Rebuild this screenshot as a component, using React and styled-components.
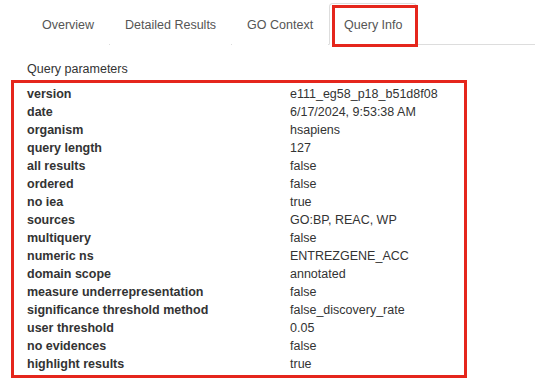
import React from 'react';
import styled, { createGlobalStyle } from 'styled-components';

const params = [
	['version', 'e111_eg58_p18_b51d8f08'],
	['date', '6/17/2024, 9:53:38 AM'],
	['organism', 'hsapiens'],
	['query length', '127'],
	['all results', 'false'],
	['ordered', 'false'],
	['no iea', 'true'],
	['sources', 'GO:BP, REAC, WP'],
	['multiquery', 'false'],
	['numeric ns', 'ENTREZGENE_ACC'],
	['domain scope', 'annotated'],
	['measure underrepresentation', 'false'],
	['significance threshold method', 'false_discovery_rate'],
	['user threshold', '0.05'],
	['no evidences', 'false'],
	['highlight results', 'true'],
];

const tabs = ['Overview', 'Detailed Results', 'GO Context', 'Query Info'];

export default function App() {
	return (
		<React.Fragment>
			<GlobalStyle />
			<Page>
				<Nav>
					{tabs.map((t) => (
						<Tab key={t} $active={t === 'Query Info'}>
							{t}
							{t === 'Query Info' && <Highlight />}
						</Tab>
					))}
				</Nav>
				<Section>
					<Heading>Query parameters</Heading>
					<Box>
						<Table>
							<tbody>
								{params.map(([k, v]) => (
									<tr key={k}>
										<Key>{k}</Key>
										<Value>{v}</Value>
									</tr>
								))}
							</tbody>
						</Table>
					</Box>
				</Section>
			</Page>
		</React.Fragment>
	);
}

const GlobalStyle = createGlobalStyle`
	body {
		margin: 0;
		background: #fff;
		font-family: "Liberation Sans", Arial, sans-serif;
		color: #333;
	}
`;

const Page = styled.div`
	padding-top: 3px;
	width: 535px;
`;

const Nav = styled.div`
	display: flex;
	margin-left: 27px;
	border-bottom: 1px solid #ddd;
`;

const Tab = styled.div`
	position: relative;
	padding: 11px 14px 9px;
	margin-right: 1px;
	margin-bottom: -1px;
	font-size: 12.5px;
	line-height: 20px;
	color: #555;
	border: 1px solid ${(p) => (p.$active ? '#ddd' : 'transparent')};
	border-bottom-color: ${(p) => (p.$active ? '#fff' : 'transparent')};
	border-radius: 4px 4px 0 0;
	background: #fff;
	white-space: nowrap;
`;

const Highlight = styled.span`
	position: absolute;
	top: 1px;
	left: 2px;
	width: 86px;
	height: 42px;
	box-sizing: border-box;
	border: 3px solid #e5261c;
`;

const Section = styled.div`
	margin-left: 11px;
`;

const Heading = styled.div`
	margin: 15px 0 2px 16px;
	font-size: 12.5px;
	line-height: 18px;
	color: #333;
`;

const Box = styled.div`
	box-sizing: border-box;
	width: 456px;
	padding: 2px 13px;
	border: 3px solid #e5261c;
`;

const Table = styled.table`
	border-collapse: collapse;
	width: 100%;
	font-size: 12.5px;
	line-height: 18px;
`;

const Key = styled.td`
	width: 263px;
	padding: 0;
	font-weight: bold;
	color: #333;
`;

const Value = styled.td`
	padding: 0;
	color: #333;
`;
